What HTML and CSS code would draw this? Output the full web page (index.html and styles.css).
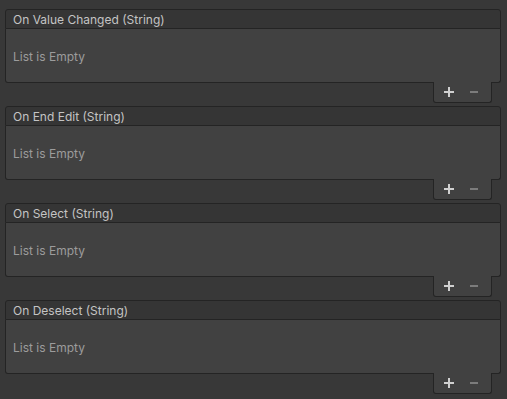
FILE: index.html
```html
<!DOCTYPE html>
<html lang="en">
<head>
    <meta charset="UTF-8">
    <meta name="viewport" content="width=device-width, initial-scale=1.0">
    <title>Events</title>
    <link rel="stylesheet" href="styles.css">
</head>
<body>
    <div class="events">
        <div class="event">
            <div class="event-head">On Value Changed (String)</div>
            <div class="event-body">List is Empty</div>
            <div class="event-foot">
                <svg class="btn" width="10" height="10" viewBox="0 0 10 10"><path d="M4 0h2v4h4v2H6v4H4V6H0V4h4z" fill="#d0d0d0"/></svg>
                <svg class="btn" width="8" height="2" viewBox="0 0 8 2"><rect width="8" height="2" fill="#7c7c7c"/></svg>
            </div>
        </div>
        <div class="event">
            <div class="event-head">On End Edit (String)</div>
            <div class="event-body">List is Empty</div>
            <div class="event-foot">
                <svg class="btn" width="10" height="10" viewBox="0 0 10 10"><path d="M4 0h2v4h4v2H6v4H4V6H0V4h4z" fill="#d0d0d0"/></svg>
                <svg class="btn" width="8" height="2" viewBox="0 0 8 2"><rect width="8" height="2" fill="#7c7c7c"/></svg>
            </div>
        </div>
        <div class="event">
            <div class="event-head">On Select (String)</div>
            <div class="event-body">List is Empty</div>
            <div class="event-foot">
                <svg class="btn" width="10" height="10" viewBox="0 0 10 10"><path d="M4 0h2v4h4v2H6v4H4V6H0V4h4z" fill="#d0d0d0"/></svg>
                <svg class="btn" width="8" height="2" viewBox="0 0 8 2"><rect width="8" height="2" fill="#7c7c7c"/></svg>
            </div>
        </div>
        <div class="event">
            <div class="event-head">On Deselect (String)</div>
            <div class="event-body">List is Empty</div>
            <div class="event-foot">
                <svg class="btn" width="10" height="10" viewBox="0 0 10 10"><path d="M4 0h2v4h4v2H6v4H4V6H0V4h4z" fill="#d0d0d0"/></svg>
                <svg class="btn" width="8" height="2" viewBox="0 0 8 2"><rect width="8" height="2" fill="#7c7c7c"/></svg>
            </div>
        </div>
    </div>
</body>
</html>
```

FILE: styles.css
```css
html, body{
    background: #383838;
}
body{
    margin: 0;
    font-family: Inter, "Noto Sans", sans-serif;
    font-size: 12px;
}
.events{
    padding: 9px 6px 0 5px;
    display: flex;
    flex-direction: column;
    gap: 3px;
}
.event{
    display: flex;
    flex-direction: column;
}
.event-head{
    height: 17px;
    padding-top: 1px;
    line-height: 18px;
    padding-left: 7px;
    color: #c4c4c4;
    background: #353535;
    border: 1px solid #242424;
    border-radius: 3px 3px 0 0;
}
.event-body{
    height: 52px;
    padding-top: 1px;
    line-height: 53px;
    padding-left: 7px;
    color: #9c9c9c;
    background: #414141;
    border: 1px solid #242424;
    border-top: none;
    border-radius: 0 0 3px 3px;
}
.event-foot{
    position: relative;
    align-self: flex-end;
    margin: -1px 9px 0 0;
    width: 47px;
    height: 20px;
    padding-left: 10px;
    display: flex;
    align-items: center;
    gap: 16px;
    background: #414141;
    border: 1px solid #242424;
    border-top: none;
    border-radius: 0 0 3px 3px;
}
.btn{
    display: block;
}
```
